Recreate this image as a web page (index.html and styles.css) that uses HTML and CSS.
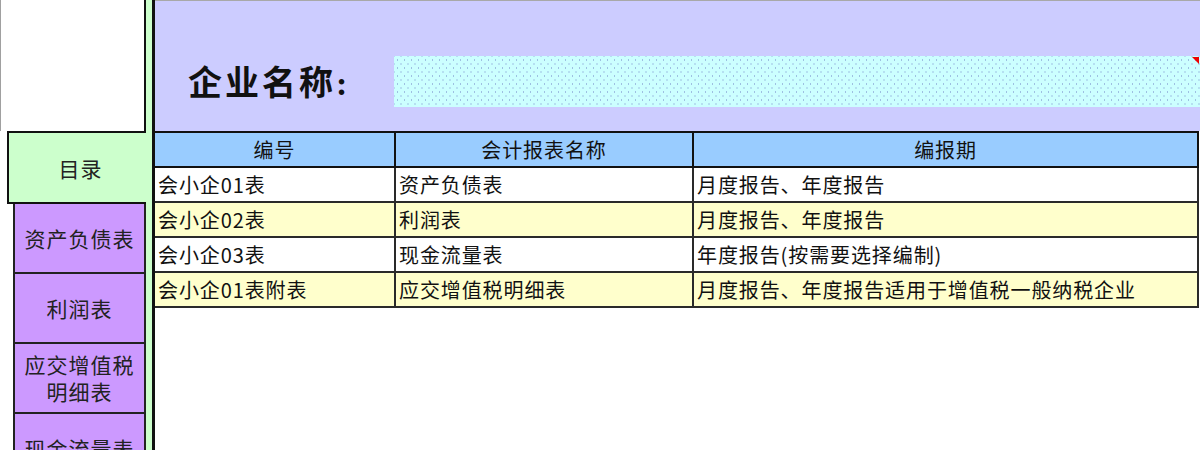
FILE: index.html
```html
<!DOCTYPE html>
<html lang="zh-CN">
<head>
<meta charset="utf-8">
<title>会计报表目录</title>
<link rel="stylesheet" href="styles.css">
</head>
<body>
<div class="app">
  <aside class="sidebar">
    <div class="tabs">
      <div class="corner"></div>
      <div class="tab tab-home">目录</div>
      <div class="tab tab-sheet">资产负债表</div>
      <div class="tab tab-sheet">利润表</div>
      <div class="tab tab-sheet tab-two"><span>应交增值税</span><span>明细表</span></div>
      <div class="tab tab-sheet">现金流量表</div>
    </div>
    <div class="strip"></div>
  </aside>
  <main class="main">
    <header class="band">
      <h1 class="title">企业名称:</h1>
      <div class="name-input"><span class="marker"></span></div>
    </header>
    <table class="catalog">
      <colgroup>
        <col class="c-code">
        <col class="c-name">
        <col class="c-period">
      </colgroup>
      <thead>
        <tr><th>编号</th><th>会计报表名称</th><th>编报期</th></tr>
      </thead>
      <tbody>
        <tr><td>会小企01表</td><td>资产负债表</td><td>月度报告、年度报告</td></tr>
        <tr class="alt"><td>会小企02表</td><td>利润表</td><td>月度报告、年度报告</td></tr>
        <tr><td>会小企03表</td><td>现金流量表</td><td>年度报告(按需要选择编制)</td></tr>
        <tr class="alt"><td>会小企01表附表</td><td>应交增值税明细表</td><td>月度报告、年度报告适用于增值税一般纳税企业</td></tr>
      </tbody>
    </table>
  </main>
</div>
</body>
</html>
```
FILE: styles.css
```css
html, body {
  margin: 0;
  height: 100%;
}
body {
  font-family: "Noto Sans CJK SC", "Noto Sans", sans-serif;
  background: #fff;
  overflow: hidden;
  color: #111;
}
.app {
  display: flex;
  height: 450px;
}
.sidebar {
  display: flex;
  width: 152px;
  flex: none;
}
.tabs {
  width: 146px;
  display: flex;
  flex-direction: column;
  background: #fff;
}
.strip {
  width: 6px;
  background: #ccffcc;
}
.corner {
  flex: none;
  height: 131px;
  box-sizing: border-box;
  border-left: 1px solid #a0a0a0;
  border-right: 2px solid #111;
  background: #fff;
}
.tab {
  flex: none;
  box-sizing: border-box;
  display: flex;
  flex-direction: column;
  align-items: center;
  justify-content: center;
  text-align: center;
  font-size: 21px;
  letter-spacing: 1px;
  line-height: 26px;
  color: #222;
}
.tab-two span {
  display: block;
  line-height: 27px;
}
.tab-home {
  margin-left: 7px;
  height: 73px;
  background: #ccffcc;
  border: 2px solid #111;
  border-right: none;
  padding-left: 6px;
}
.tab-sheet {
  margin-left: 13px;
  height: 70px;
  background: #cc99ff;
  border: 2px solid #222;
  border-top: none;
}
.main {
  flex: 1;
  min-width: 0;
  border-left: 3px solid #111;
  background: #fff;
  display: flex;
  flex-direction: column;
}
.band {
  flex: none;
  height: 131px;
  box-sizing: border-box;
  background: #ccccff;
  border-top: 1px solid #a8a8a8;
  display: flex;
  align-items: flex-start;
  padding: 55px 0 0 33px;
}
.title {
  margin: 0;
  width: 206px;
  flex: none;
  padding-top: 2px;
  font-family: "Liberation Serif", "Noto Sans CJK SC", serif;
  font-size: 34px;
  font-weight: 700;
  letter-spacing: 3px;
  line-height: 51px;
  color: #111;
}
.name-input {
  flex: 1;
  height: 51px;
  position: relative;
  background-color: #ccffff;
  background-image:
    radial-gradient(circle, #9ec0e2 0.55px, transparent 0.9px),
    radial-gradient(circle, #9ec0e2 0.55px, transparent 0.9px);
  background-size: 7px 8px, 7px 8px;
  background-position: 0 0, 3.5px 4px;
}
.marker {
  position: absolute;
  top: 1px;
  right: 1px;
  width: 0;
  height: 0;
  border-top: 7px solid #ee0000;
  border-left: 7px solid transparent;
}
.catalog {
  width: calc(100% - 1px);
  border-collapse: collapse;
  table-layout: fixed;
  font-size: 20px;
  letter-spacing: 0.9px;
}
.c-code { width: 240px; }
.c-name { width: 298px; }
.catalog th,
.catalog td {
  height: 35px;
  box-sizing: border-box;
  border: 2px solid #2a2a2a;
  padding: 0 3px;
  white-space: nowrap;
  overflow: hidden;
  font-weight: 400;
  color: #111;
  line-height: 24px;
}
.catalog th:first-child,
.catalog td:first-child {
  border-left: none;
}
.catalog th {
  background: #99ccff;
  text-align: center;
  border-color: #111;
}
.catalog td {
  text-align: left;
  background: #fff;
}
.catalog tr.alt td {
  background: #ffffcc;
}
```
